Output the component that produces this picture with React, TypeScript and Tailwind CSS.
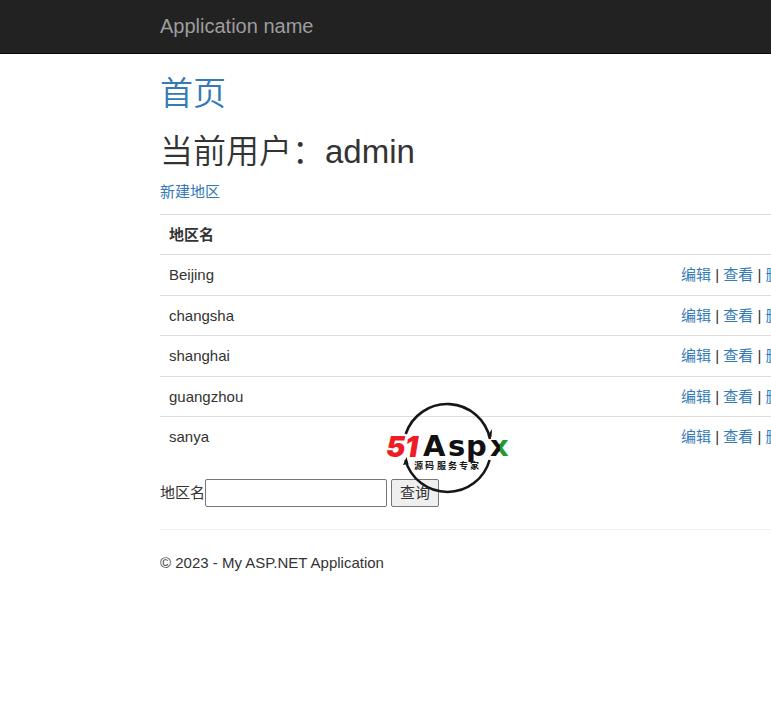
import React from 'react';

const regions = ['Beijing', 'changsha', 'shanghai', 'guangzhou', 'sanya'];

const linkClass = 'text-[#337ab7] hover:underline';

/**
 * 51Aspx ロゴ
 */
const Logo: React.FC = () => (
  <svg
    className="pointer-events-none absolute left-[217px] top-[339px] h-[110px] w-[140px]"
    viewBox="0 0 140 110"
    role="img"
    aria-label="51Aspx"
  >
    <defs>
      <linearGradient id="logo-x" x1="0" y1="0" x2="1" y2="0">
        <stop offset="0.5" stopColor="#111111" />
        <stop offset="0.5" stopColor="#1f9a2e" />
      </linearGradient>
    </defs>
    <g fill="none" stroke="#161616" strokeWidth="2.6">
      <path d="M28.7 41A43.7 43.7 0 0 1 113 46" />
      <path d="M28.4 67A43.7 43.7 0 0 0 112.6 67" />
    </g>
    <path d="M110.5 43l4.5-7-.5 8zM29.5 64l-3.5 8 5.5-1z" fill="#161616" />
    <g fontWeight="900" fontSize="29">
      <text x="9 28" y="64" fill="#ee1c25" fontFamily="Inter, sans-serif" fontStyle="italic">51</text>
      <g fontFamily='"DejaVu Sans", sans-serif'>
        <text x="46 71 89" y="63" fill="#111111">Asp</text>
        <text x="113" y="63" fill="url(#logo-x)">x</text>
      </g>
    </g>
    <text
      x="37 48 60 71 82 93"
      y="76"
      fill="#161616"
      fontFamily='"Noto Sans CJK SC", sans-serif'
      fontWeight="bold"
      fontSize="9"
    >
      源码服务专家
    </text>
  </svg>
);

const RegionTable: React.FC = () => (
  <table className="w-full table-fixed border-collapse">
    <thead>
      <tr className="h-[40px] border-t border-[#dddddd]">
        <th className="w-[512px] px-[9px] text-left font-bold">地区名</th>
        <th className="px-[9px]"></th>
      </tr>
    </thead>
    <tbody>
      {regions.map((name) => (
        <tr key={name} className="h-[41px] border-t border-[#dddddd] even:h-[40px]">
          <td className="px-[9px]">{name}</td>
          <td className="px-[9px]">
            <a href="#edit" className={linkClass}>编辑</a>
            {' | '}
            <a href="#details" className={linkClass}>查看</a>
            {' | '}
            <a href="#delete" className={linkClass}>删除</a>
          </td>
        </tr>
      ))}
    </tbody>
  </table>
);

const App: React.FC = () => {
  return (
    <div className="min-h-screen overflow-x-hidden bg-white font-['Liberation_Sans','Noto_Sans_CJK_SC',sans-serif] text-[15px] leading-[22px] text-[#333333]">
      <nav className="flex h-[54px] items-center border-b border-[#080808] bg-[#222222] pb-0.5 pl-40">
        <a href="#home" className="text-[20px] text-[#9d9d9d]">Application name</a>
      </nav>

      <div className="relative ml-40 min-w-[1226px]">
        <main>
          <h2 className="pt-[22px] text-[33px] leading-[36px] font-[350]">
            <a href="#index" className="text-[#337ab7]">首页</a>
          </h2>
          <h2 className="mt-[22px] mb-[11px] text-[33px] leading-[36px] font-[350]">当前用户：admin</h2>
          <p className="mb-[11px]">
            <a href="#create" className={linkClass}>新建地区</a>
          </p>

          <RegionTable />

          <form className="mt-[21px] flex h-7 items-center" onSubmit={(e) => e.preventDefault()}>
            <label htmlFor="region">地区名</label>
            <input
              id="region"
              type="text"
              className="h-7 w-[182px] rounded-[2px] border border-[#767676] bg-white px-1 outline-none"
            />
            <button
              type="submit"
              className="ml-1 h-7 w-12 rounded-[2px] border border-[#767676] bg-[#efefef] text-center"
            >
              查询
            </button>
          </form>
        </main>

        <hr className="mt-[22px] border-[#eeeeee]" />
        <footer className="py-[22px]">
          <p>&copy; 2023 - My ASP.NET Application</p>
        </footer>

        <Logo />
      </div>
    </div>
  );
};

export default App;
